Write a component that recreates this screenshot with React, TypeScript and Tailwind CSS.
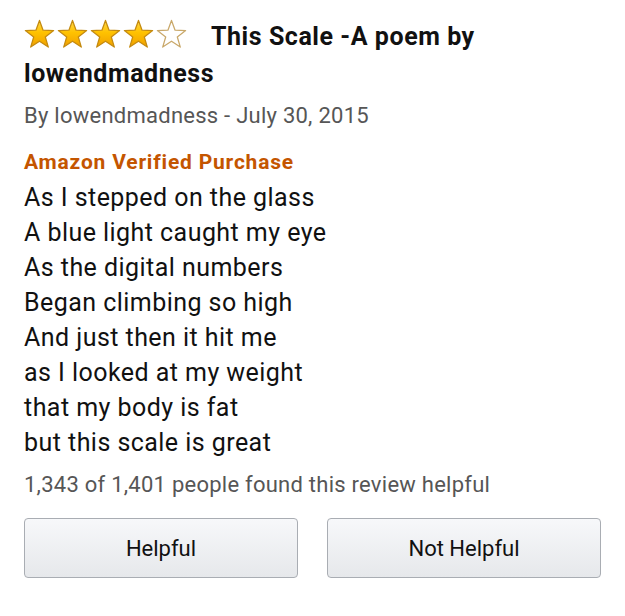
import React from "react";

function Star({ filled }: { filled: boolean }) {
  return (
    <svg width="31" height="30" viewBox="0 0 32 31" className="block">
      <defs>
        <linearGradient id="starFill" x1="0" y1="0" x2="0" y2="1">
          <stop offset="0%" stopColor="#ffd84a" />
          <stop offset="45%" stopColor="#ffc200" />
          <stop offset="100%" stopColor="#f0a000" />
        </linearGradient>
      </defs>
      <polygon
        points="16,1.5 19.7,11.6 30.6,11.9 22,18.6 25.1,29 16,23 6.9,29 10,18.6 1.4,11.9 12.3,11.6"
        fill={filled ? "url(#starFill)" : "#ffffff"}
        stroke={filled ? "#c48a10" : "#c9a86a"}
        strokeWidth="1.3"
        strokeLinejoin="round"
      />
    </svg>
  );
}

const poem = [
  "As I stepped on the glass",
  "A blue light caught my eye",
  "As the digital numbers",
  "Began climbing so high",
  "And just then it hit me",
  "as I looked at my weight",
  "that my body is fat",
  "but this scale is great",
];

export default function App() {
  return (
    <div className="min-h-screen bg-white px-6 pt-[18px] font-['Roboto',sans-serif]">
      {/* Title with stars */}
      <h1 className="text-[25px] font-bold leading-[37px] tracking-[0.55px] text-[#111111]">
        <span className="mr-[24px] inline-flex gap-[2px] align-top pt-[1px]">
          {[true, true, true, true, false].map((f, i) => (
            <Star key={i} filled={f} />
          ))}
        </span>
        This Scale -A poem by lowendmadness
      </h1>

      <p className="mt-[9px] text-[22px] leading-[30px] tracking-[0.25px] text-[#565656]">
        By lowendmadness - July 30, 2015
      </p>

      <p className="mt-[17px] text-[21px] font-bold leading-[28px] tracking-[0.8px] text-[#c45500]">
        Amazon Verified Purchase
      </p>

      <div className="mt-[4px] text-[25px] leading-[35px] tracking-[0.45px] text-[#111111]">
        {poem.map((line) => (
          <p key={line}>{line}</p>
        ))}
      </div>

      <p className="mt-[10px] text-[22px] leading-[30px] tracking-[0.25px] text-[#565656]">
        1,343 of 1,401 people found this review helpful
      </p>

      <div className="mt-[18px] grid grid-cols-2 gap-[29px]">
        {["Helpful", "Not Helpful"].map((label) => (
          <button
            key={label}
            className="h-[60px] rounded-[4px] border border-[#a9adb3] bg-gradient-to-b from-[#f7f8fa] to-[#e6e8eb] text-[22px] text-[#111111]"
          >
            {label}
          </button>
        ))}
      </div>
    </div>
  );
}
